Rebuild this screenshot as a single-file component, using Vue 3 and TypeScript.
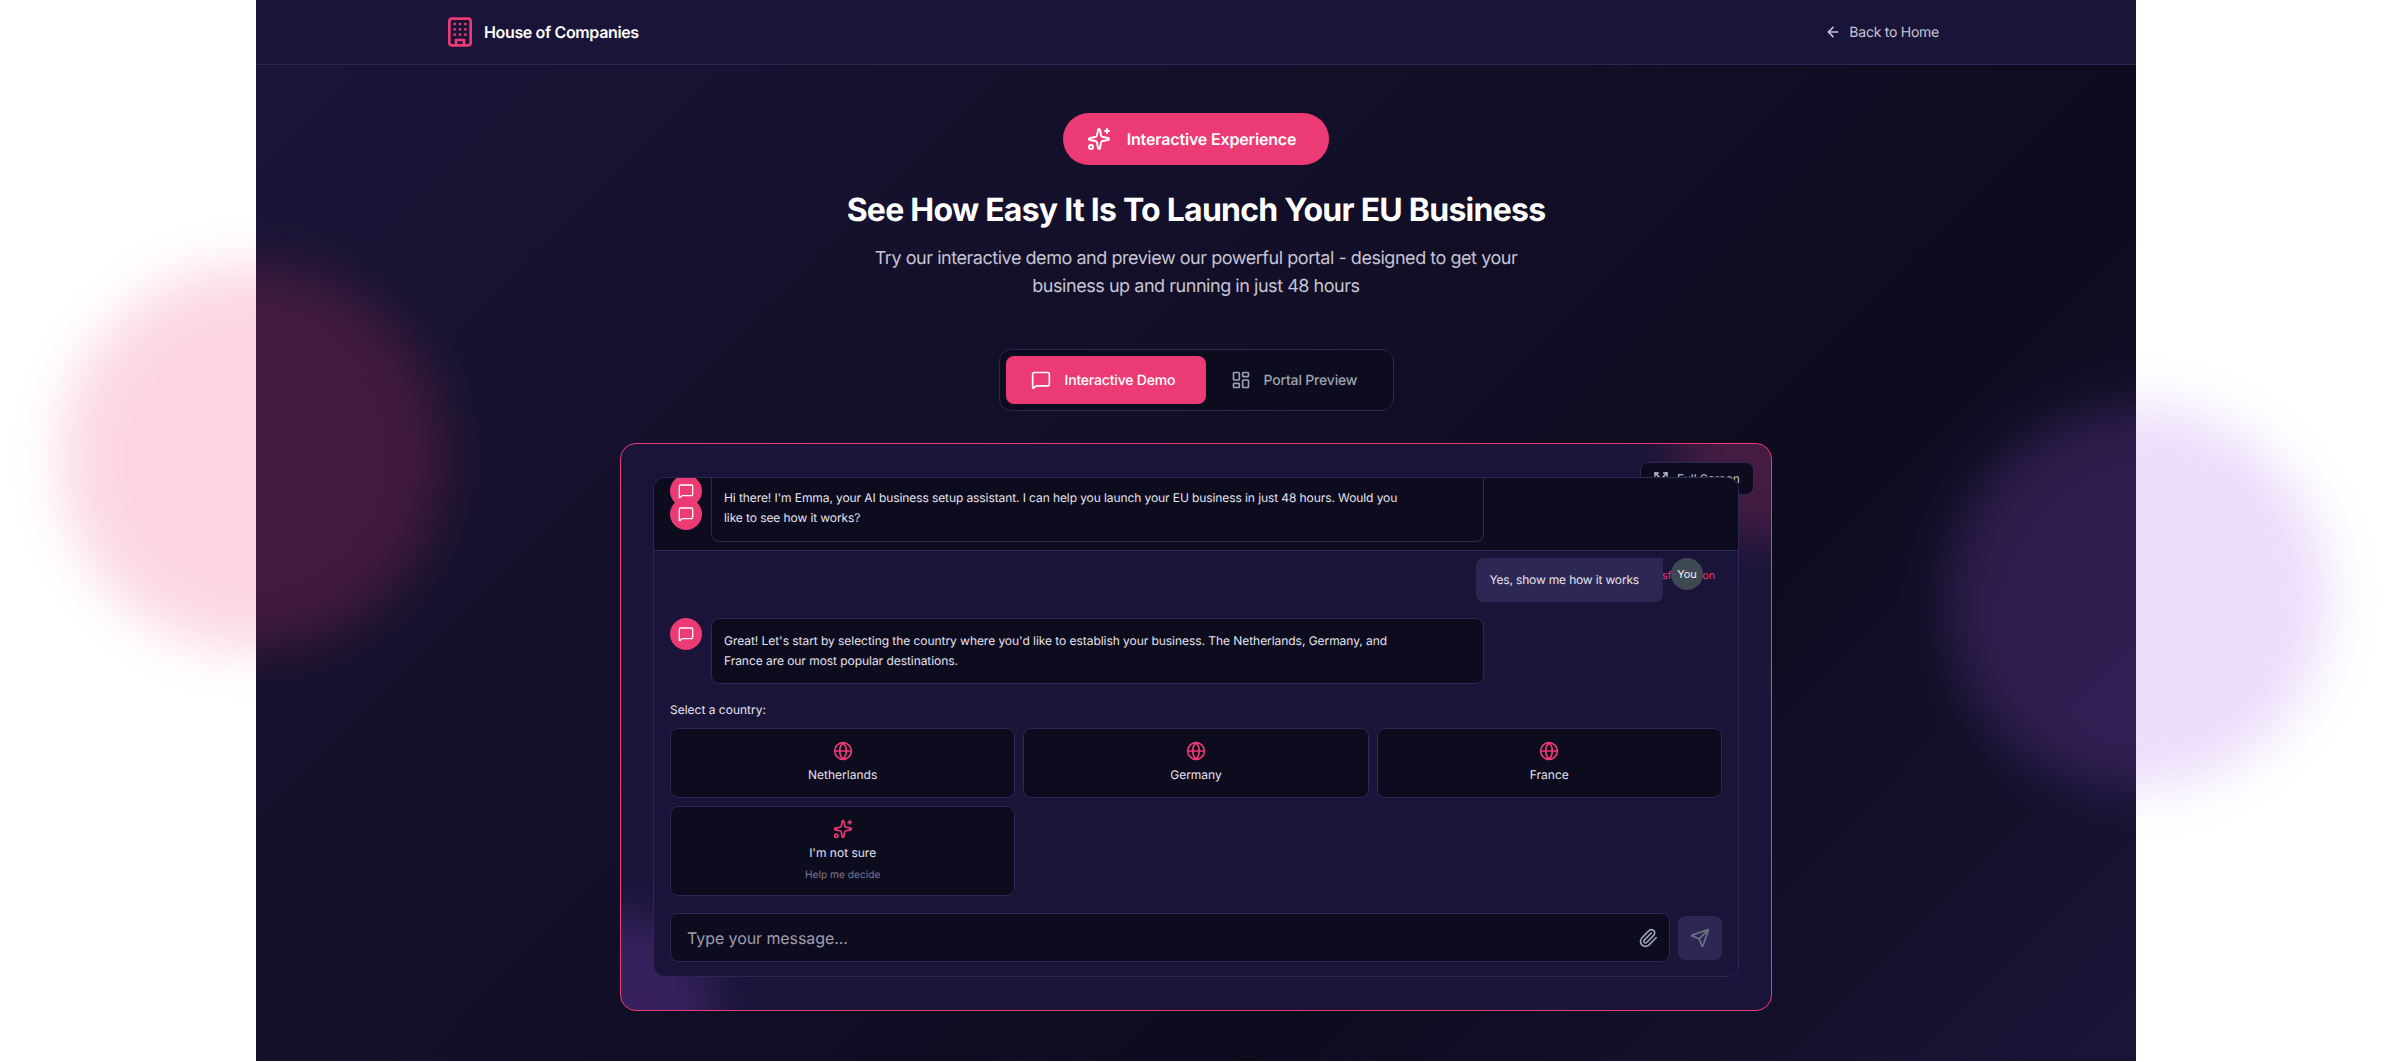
<script setup lang="ts">
const countries: string[] = ['Netherlands', 'Germany', 'France']
</script>

<template>
  <div class="page">
    <div class="blob blob-pink"></div>
    <div class="blob blob-purple"></div>
    <div class="main">
      <header class="topbar">
        <div class="topbar-inner">
          <div class="brand">
            <svg class="ic-32" viewBox="0 0 24 24" fill="none" stroke="#ec3a74" stroke-width="2" stroke-linecap="round" stroke-linejoin="round"><rect width="16" height="20" x="4" y="2" rx="2" ry="2"/><path d="M9 22v-4h6v4"/><path d="M8 6h.01"/><path d="M16 6h.01"/><path d="M12 6h.01"/><path d="M12 10h.01"/><path d="M12 14h.01"/><path d="M16 10h.01"/><path d="M16 14h.01"/><path d="M8 10h.01"/><path d="M8 14h.01"/></svg>
            <span>House of Companies</span>
          </div>
          <a class="back">
            <svg class="ic-16" viewBox="0 0 24 24" fill="none" stroke="currentColor" stroke-width="2.4" stroke-linecap="round" stroke-linejoin="round"><path d="m12 19-7-7 7-7"/><path d="M19 12H5"/></svg>
            <span>Back to Home</span>
          </a>
        </div>
      </header>

      <section class="hero">
        <div class="badge">
          <svg class="ic-24" viewBox="0 0 24 24" fill="none" stroke="currentColor" stroke-width="2" stroke-linecap="round" stroke-linejoin="round"><path d="M11.017 2.814a1 1 0 0 1 1.966 0l1.051 5.558a2 2 0 0 0 1.594 1.594l5.558 1.051a1 1 0 0 1 0 1.966l-5.558 1.051a2 2 0 0 0-1.594 1.594l-1.051 5.558a1 1 0 0 1-1.966 0l-1.051-5.558a2 2 0 0 0-1.594-1.594l-5.558-1.051a1 1 0 0 1 0-1.966l5.558-1.051a2 2 0 0 0 1.594-1.594z"/><path d="M20 2v4"/><path d="M22 4h-4"/><circle cx="4" cy="20" r="2"/></svg>
          <span>Interactive Experience</span>
        </div>
        <h1>See How Easy It Is To Launch Your EU Business</h1>
        <p>Try our interactive demo and preview our powerful portal - designed to get your business up and running in just 48 hours</p>

        <div class="tabs">
          <button class="tab tab-demo active">
            <svg class="ic-20" viewBox="0 0 24 24" fill="none" stroke="currentColor" stroke-width="2" stroke-linecap="round" stroke-linejoin="round"><path d="M22 17a2 2 0 0 1-2 2H6.828a2 2 0 0 0-1.414.586l-2.202 2.202A.71.71 0 0 1 2 21.286V5a2 2 0 0 1 2-2h16a2 2 0 0 1 2 2z"/></svg>
            <span>Interactive Demo</span>
          </button>
          <button class="tab tab-portal">
            <svg class="ic-20" viewBox="0 0 24 24" fill="none" stroke="currentColor" stroke-width="2" stroke-linecap="round" stroke-linejoin="round"><rect width="7" height="9" x="3" y="3" rx="1"/><rect width="7" height="5" x="14" y="3" rx="1"/><rect width="7" height="9" x="14" y="12" rx="1"/><rect width="7" height="5" x="3" y="16" rx="1"/></svg>
            <span>Portal Preview</span>
          </button>
        </div>
      </section>

      <section class="card">
        <div class="glow glow-pink"></div>
        <div class="glow glow-purple"></div>
        <button class="fullscreen">
          <svg class="ic-16" viewBox="0 0 24 24" fill="none" stroke="currentColor" stroke-width="2" stroke-linecap="round" stroke-linejoin="round"><path d="m15 15 6 6"/><path d="m15 9 6-6"/><path d="M21 16v5h-5"/><path d="M21 8V3h-5"/><path d="M3 16v5h5"/><path d="m3 21 6-6"/><path d="M3 8V3h5"/><path d="M9 9 3 3"/></svg>
          <span>Full Screen</span>
        </button>

        <div class="chat">
          <div class="pinned">
            <div class="avatars">
              <div class="avatar">
                <svg class="ic-16" viewBox="0 0 24 24" fill="none" stroke="currentColor" stroke-width="2" stroke-linecap="round" stroke-linejoin="round"><path d="M22 17a2 2 0 0 1-2 2H6.828a2 2 0 0 0-1.414.586l-2.202 2.202A.71.71 0 0 1 2 21.286V5a2 2 0 0 1 2-2h16a2 2 0 0 1 2 2z"/></svg>
              </div>
              <div class="avatar over">
                <svg class="ic-16" viewBox="0 0 24 24" fill="none" stroke="currentColor" stroke-width="2" stroke-linecap="round" stroke-linejoin="round"><path d="M22 17a2 2 0 0 1-2 2H6.828a2 2 0 0 0-1.414.586l-2.202 2.202A.71.71 0 0 1 2 21.286V5a2 2 0 0 1 2-2h16a2 2 0 0 1 2 2z"/></svg>
              </div>
            </div>
            <div class="bubble bubble-top">Hi there! I'm Emma, your AI business setup assistant. I can help you launch your EU business in just 48 hours. Would you like to see how it works?</div>
          </div>

          <div class="body">
            <div class="restart">Your Transformation</div>
            <div class="user-row">
              <div class="user-bubble">Yes, show me how it works</div>
              <div class="you">You</div>
            </div>
            <div class="bot-row">
              <div class="avatar">
                <svg class="ic-16" viewBox="0 0 24 24" fill="none" stroke="currentColor" stroke-width="2" stroke-linecap="round" stroke-linejoin="round"><path d="M22 17a2 2 0 0 1-2 2H6.828a2 2 0 0 0-1.414.586l-2.202 2.202A.71.71 0 0 1 2 21.286V5a2 2 0 0 1 2-2h16a2 2 0 0 1 2 2z"/></svg>
              </div>
              <div class="bubble">Great! Let's start by selecting the country where you'd like to establish your business. The Netherlands, Germany, and France are our most popular destinations.</div>
            </div>
            <div class="select-label">Select a country:</div>
            <div class="options">
              <button v-for="c in countries" :key="c" class="option">
                <svg class="ic-20 pink" viewBox="0 0 24 24" fill="none" stroke="currentColor" stroke-width="2" stroke-linecap="round" stroke-linejoin="round"><circle cx="12" cy="12" r="10"/><path d="M12 2a14.5 14.5 0 0 0 0 20 14.5 14.5 0 0 0 0-20"/><path d="M2 12h20"/></svg>
                <span>{{ c }}</span>
              </button>
              <button class="option">
                <svg class="ic-20 pink" viewBox="0 0 24 24" fill="none" stroke="currentColor" stroke-width="2" stroke-linecap="round" stroke-linejoin="round"><path d="M11.017 2.814a1 1 0 0 1 1.966 0l1.051 5.558a2 2 0 0 0 1.594 1.594l5.558 1.051a1 1 0 0 1 0 1.966l-5.558 1.051a2 2 0 0 0-1.594 1.594l-1.051 5.558a1 1 0 0 1-1.966 0l-1.051-5.558a2 2 0 0 0-1.594-1.594l-5.558-1.051a1 1 0 0 1 0-1.966l5.558-1.051a2 2 0 0 0 1.594-1.594z"/><path d="M20 2v4"/><path d="M22 4h-4"/><circle cx="4" cy="20" r="2"/></svg>
                <span>I'm not sure</span>
                <small>Help me decide</small>
              </button>
            </div>
          </div>

          <div class="composer">
            <div class="input">
              <span>Type your message...</span>
              <svg class="ic-20 clip" viewBox="0 0 24 24" fill="none" stroke="currentColor" stroke-width="2" stroke-linecap="round" stroke-linejoin="round"><path d="m16 6-8.414 8.586a2 2 0 0 0 2.829 2.829l8.414-8.586a4 4 0 1 0-5.657-5.657l-8.379 8.551a6 6 0 1 0 8.485 8.485l8.379-8.551"/></svg>
            </div>
            <button class="send">
              <svg class="ic-20" viewBox="0 0 24 24" fill="none" stroke="currentColor" stroke-width="2" stroke-linecap="round" stroke-linejoin="round"><path d="M14.536 21.686a.5.5 0 0 0 .937-.024l6.5-19a.496.496 0 0 0-.635-.635l-19 6.5a.5.5 0 0 0-.024.937l7.93 3.18a2 2 0 0 1 1.112 1.11z"/><path d="m21.854 2.147-10.94 10.939"/></svg>
            </button>
          </div>
        </div>
      </section>
    </div>
  </div>
</template>

<style>
html, body { margin: 0; background: #fff; }
</style>

<style scoped>
.page {
  position: relative;
  height: 1062px;
  overflow: hidden;
  background: #fff;
  font-family: Inter, "Liberation Sans", sans-serif;
  text-rendering: geometricPrecision;
}
.ic-16, .ic-20, .ic-24, .ic-32 { display: block; flex: none; }
.ic-16 { width: 16px; height: 16px; }
.ic-20 { width: 20px; height: 20px; }
.ic-24 { width: 24px; height: 24px; }
.ic-32 { width: 32px; height: 32px; }
.pink { color: #ec3a74; }

.main {
  width: 1880px;
  height: 1061px;
  margin: 0 auto;
  background: linear-gradient(135deg, #1a1538 0%, #0d0b1e 70%, #1a1538 100%);
}
.blob {
  position: absolute;
  z-index: 3;
  width: 384px;
  height: 384px;
  border-radius: 50%;
  filter: blur(26px);
  opacity: 0.2;
  pointer-events: none;
}
.blob-pink { left: 61px; top: 266px; background: #ec3a74; }
.blob-purple { left: 1945px; top: 405px; background: #a05ce8; }

.topbar {
  height: 64px;
  background: #1a1538;
  border-bottom: 1px solid #2d2755;
}
.topbar-inner {
  width: 1504px;
  height: 64px;
  margin: 0 auto;
  display: flex;
  align-items: center;
  justify-content: space-between;
}
.brand {
  display: flex;
  align-items: center;
  gap: 8px;
  color: #fff;
  font-size: 16px;
  font-weight: 600;
  letter-spacing: -0.36px;
}
.back {
  display: flex;
  align-items: center;
  gap: 8px;
  padding-right: 9px;
  color: #c7c4d4;
  font-size: 14px;
  letter-spacing: -0.25px;
}

.hero {
  display: flex;
  flex-direction: column;
  align-items: center;
  padding-top: 48px;
}
.badge {
  height: 52px;
  box-sizing: border-box;
  display: flex;
  align-items: center;
  gap: 16px;
  padding: 0 33px 0 24px;
  border-radius: 26px;
  background: #ec3a74;
  color: #fff;
  font-size: 16px;
  font-weight: 600;
  letter-spacing: -0.17px;
}
h1 {
  margin: 25px 0 0;
  color: #fff;
  font-size: 32px;
  line-height: 40px;
  font-weight: 700;
  letter-spacing: -0.75px;
}
.hero p {
  width: 672px;
  margin: 15px 0 0;
  color: #c7c4d4;
  font-size: 18px;
  line-height: 28px;
  letter-spacing: -0.46px;
  text-align: center;
}
.tabs {
  margin-top: 48px;
  display: flex;
  padding: 6px;
  border: 1px solid #2d2755;
  border-radius: 12px;
  background: #0d0b1e;
}
.tab {
  box-sizing: border-box;
  height: 48px;
  display: flex;
  align-items: center;
  gap: 14px;
  padding: 0 0 0 25px;
  border: 0;
  border-radius: 8px;
  background: transparent;
  color: #9ca3af;
  font: 500 14px Inter, sans-serif;
  letter-spacing: -0.18px;
  text-rendering: geometricPrecision;
}
.tab-demo { width: 200px; }
.tab-portal { width: 181px; gap: 13px; }
.tab.active { background: #ec3a74; color: #fff; }

.card {
  position: relative;
  box-sizing: border-box;
  width: 1152px;
  height: 568px;
  margin: 32px auto 0;
  padding: 33px 32px 32px;
  overflow: hidden;
  border: 1px solid #ec3a74;
  border-radius: 16px;
  background: #1a1538;
}
.glow {
  position: absolute;
  width: 192px;
  height: 192px;
  border-radius: 50%;
  filter: blur(24px);
  opacity: 0.2;
}
.glow-pink { top: -96px; right: -96px; background: #ec3a74; }
.glow-purple { bottom: -96px; left: -96px; background: #a855f7; }
.fullscreen {
  position: absolute;
  top: 18px;
  right: 17px;
  box-sizing: border-box;
  width: 114px;
  height: 33px;
  display: flex;
  align-items: center;
  gap: 8px;
  padding: 0 0 0 12px;
  border: 1px solid #2d2755;
  border-radius: 8px;
  background: #0d0b1e;
  color: #c7c4d4;
  font: 12px Inter, sans-serif;
  text-rendering: geometricPrecision;
}

.chat {
  position: relative;
  box-sizing: border-box;
  height: 500px;
  display: flex;
  flex-direction: column;
  overflow: hidden;
  border: 1px solid #2d2755;
  border-radius: 12px;
}
.pinned {
  flex: none;
  height: 73px;
  box-sizing: border-box;
  display: flex;
  gap: 9px;
  padding: 0 16px;
  background: #0d0b1e;
  border-bottom: 1px solid #2d2755;
}
.avatars { width: 32px; flex: none; margin-top: -3px; }
.avatar {
  width: 32px;
  height: 32px;
  flex: none;
  display: flex;
  align-items: center;
  justify-content: center;
  border-radius: 50%;
  background: #ec3a74;
  color: #fff;
}
.avatar.over { margin-top: -9px; }
.bubble {
  box-sizing: border-box;
  width: 773px;
  padding: 12px 72px 12px 12px;
  border: 1px solid #2d2755;
  border-radius: 8px;
  background: #0d0b1e;
  color: #e5e3ee;
  font-size: 12px;
  line-height: 20px;
  letter-spacing: -0.05px;
}
.bubble-top {
  height: 65px;
  margin-top: -1px;
  border-top: 0;
  border-radius: 0 0 8px 8px;
  padding-top: 11px;
  letter-spacing: -0.09px;
}
.body {
  flex: 1;
  min-height: 0;
  position: relative;
  box-sizing: border-box;
  padding: 7px 16px 0;
  display: flex;
  flex-direction: column;
  background: #1a1538;
}
.restart {
  position: absolute;
  top: 17px;
  right: 23px;
  color: #ec3a74;
  font-size: 10.5px;
  line-height: 16px;
}
.user-row {
  position: relative;
  display: flex;
  justify-content: flex-end;
  gap: 8px;
  margin-right: 19px;
}
.user-bubble {
  box-sizing: border-box;
  height: 44px;
  padding: 12px 24px 12px 13px;
  border-radius: 8px 0 8px 8px;
  background: #2d2755;
  color: #e5e3ee;
  font-size: 12px;
  line-height: 20px;
  letter-spacing: -0.17px;
}
.you {
  width: 32px;
  height: 32px;
  display: flex;
  align-items: center;
  justify-content: center;
  border-radius: 50%;
  background: #3e4853;
  color: #f1f1f4;
  font-size: 11px;
}
.bot-row { display: flex; gap: 9px; margin-top: 16px; }
.select-label {
  margin-top: 16px;
  color: #e5e3ee;
  font-size: 12px;
  line-height: 20px;
}
.options {
  margin-top: 8px;
  display: grid;
  grid-template-columns: repeat(3, 1fr);
  gap: 8px;
}
.option {
  box-sizing: border-box;
  display: flex;
  flex-direction: column;
  align-items: center;
  gap: 4px;
  padding: 12px;
  border: 1px solid #2d2755;
  border-radius: 8px;
  background: #0d0b1e;
  color: #e5e3ee;
  font: 12px/20px Inter, sans-serif;
  text-rendering: geometricPrecision;
}
.option small { color: #7c7990; font-size: 10.2px; line-height: 16px; }
.composer {
  flex: none;
  display: flex;
  align-items: center;
  gap: 8px;
  padding: 0 16px 14px;
  background: #1a1538;
}
.input {
  flex: 1;
  height: 49px;
  box-sizing: border-box;
  display: flex;
  align-items: center;
  justify-content: space-between;
  padding: 0 11px 0 16px;
  border: 1px solid #2d2755;
  border-radius: 8px;
  background: #0d0b1e;
  color: #a09eae;
  font-size: 16px;
  letter-spacing: -0.08px;
}
.clip { color: #9ca3af; }
.send {
  width: 44px;
  height: 44px;
  display: flex;
  align-items: center;
  justify-content: center;
  padding: 0;
  border: 0;
  border-radius: 8px;
  background: #2d2755;
  color: #6b7280;
}
</style>
